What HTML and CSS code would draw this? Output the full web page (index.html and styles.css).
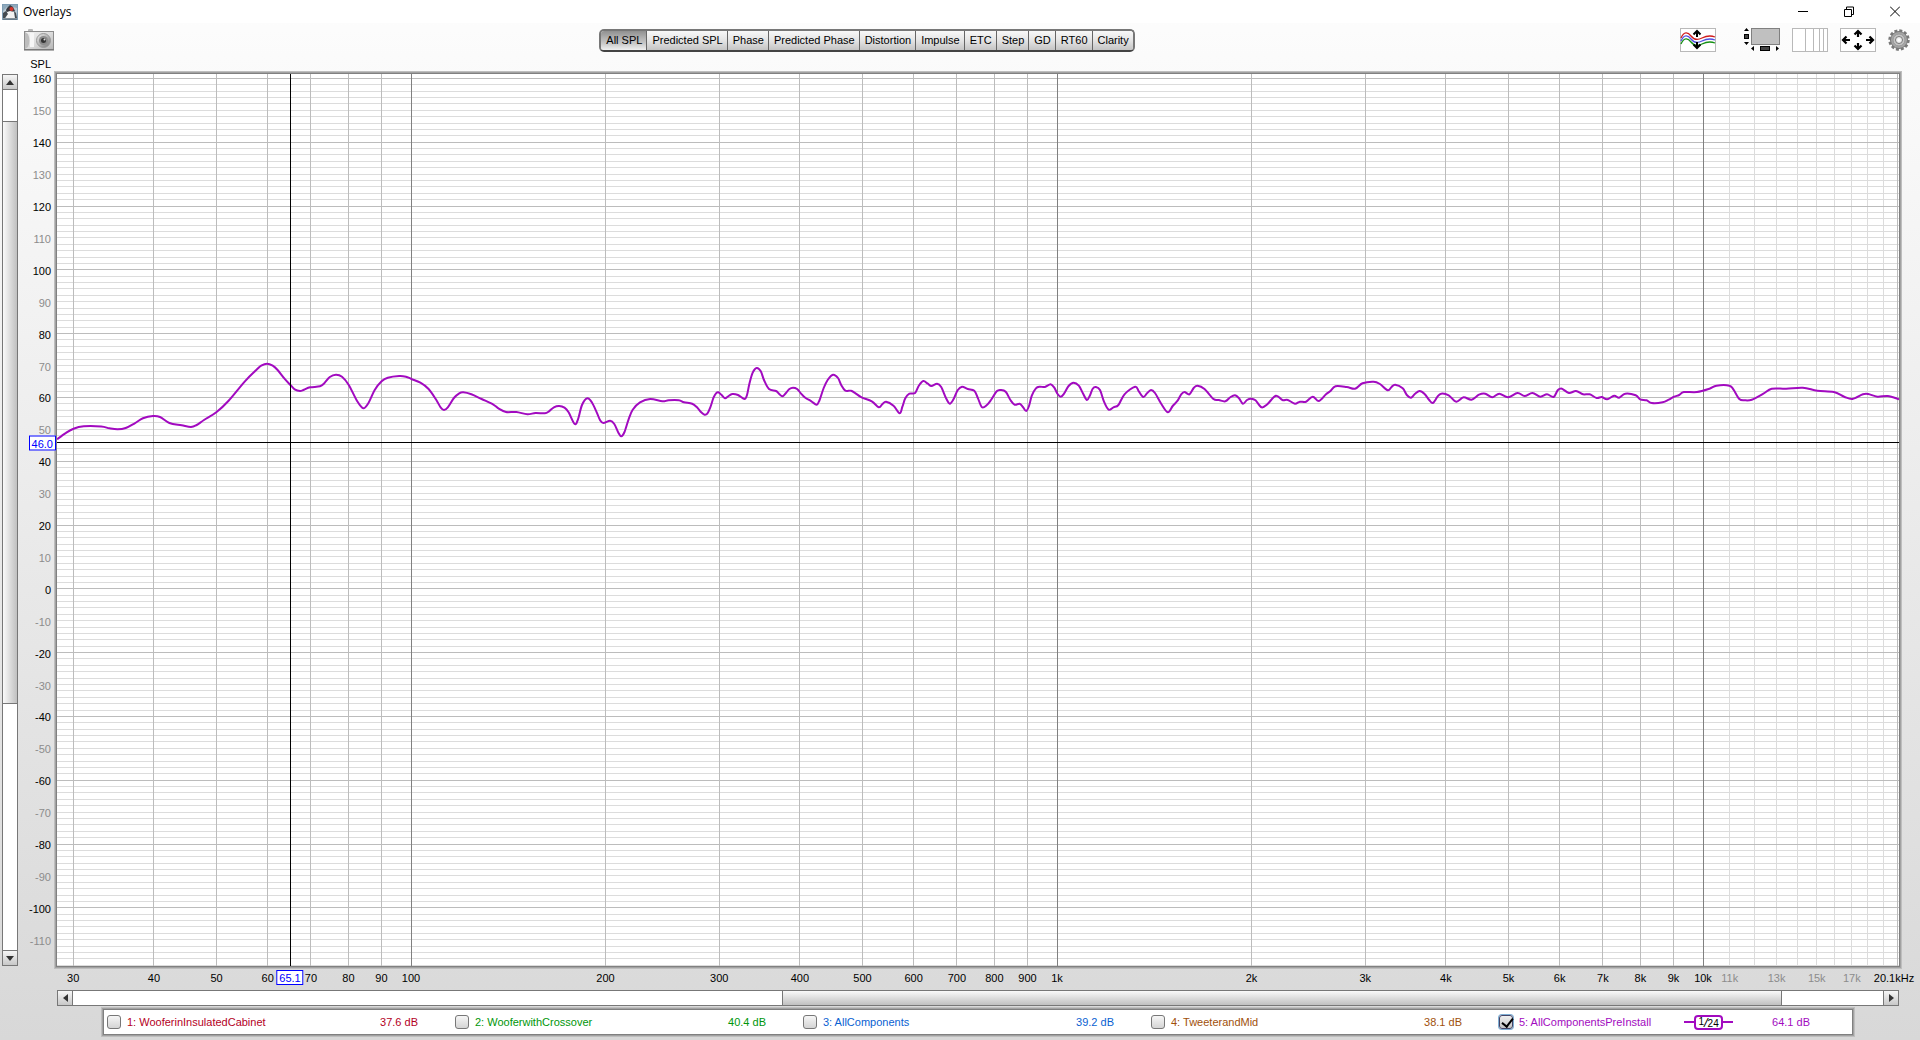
FILE: index.html
```
<!DOCTYPE html>
<html lang="en">
<head>
<meta charset="utf-8">
<title>Overlays</title>
<link rel="stylesheet" href="styles.css">
</head>
<body>
<header class="titlebar">
  <svg class="app-icon" width="16" height="16" viewBox="0 0 16 16" aria-hidden="true">
    <rect width="16" height="16" fill="#7f9db4"/>
    <rect x="1" y="1" width="14" height="14" fill="#b9c8d2"/>
    <path d="M1 1h14v3L11 3 5 3 1 7z" fill="#8fa9bb"/>
    <path d="M5 4l3-3 3 2 2 4-3 1-5 1-1-3z" fill="#3a3a40"/>
    <path d="M5 8l3-1 4 1 1 6H4z" fill="#f2f2f2"/>
    <path d="M1 9l3-2 2 3-3 4H1zM12 7l2 2 1 5h-2z" fill="#444a50"/>
    <circle cx="9.500" cy="5" r="2" fill="#d8352c"/>
    <path d="M1 15h14" stroke="#4c5860"/>
  </svg>
  <h1 class="title">Overlays</h1>
  <div class="window-buttons">
    <button type="button" aria-label="Minimize"><svg width="10" height="11" viewBox="0 0 10 11"><path d="M0 5.500h10" stroke="#000" fill="none"/></svg></button>
    <button type="button" aria-label="Restore"><svg width="10" height="11" viewBox="0 0 10 11"><path d="M.5 3.500h7v7h-7zM2.500 3.500v-2.500h7v7.500h-2" stroke="#000" fill="none"/></svg></button>
    <button type="button" aria-label="Close"><svg width="10" height="11" viewBox="0 0 10 11"><path d="M0 .5l10 10M10 .5l-10 10" stroke="#000" fill="none"/></svg></button>
  </div>
</header>

<div class="toolbar">
  <button type="button" class="tool" aria-label="Capture">
    <svg width="30" height="22" viewBox="0 0 30 22">
      <defs>
        <linearGradient id="cam" x1="0" y1="0" x2="1" y2="1"><stop offset="0" stop-color="#f4f4f4"/><stop offset=".5" stop-color="#dcdcdc"/><stop offset="1" stop-color="#b4b4b4"/></linearGradient>
        <linearGradient id="lens" x1="0" y1="0" x2="1" y2="1"><stop offset="0" stop-color="#eee"/><stop offset="1" stop-color="#777"/></linearGradient>
      </defs>
      <rect x="4" y="0" width="5" height="3" rx="1" fill="#b8b8b8"/>
      <rect x=".5" y="2.500" width="29" height="18" fill="url(#cam)" stroke="#8c8c8c"/>
      <path d="M1 20V3l3 2c2 4 2 9 0 13z" fill="#bdbdbd"/>
      <rect x="6" y="4" width="4" height="14" fill="#f6f6f6"/>
      <path d="M0 21h30" stroke="#666"/>
      <circle cx="19.500" cy="11.500" r="7" fill="url(#lens)" stroke="#999"/>
      <circle cx="19.500" cy="11.500" r="4.500" fill="#8b8b8b"/>
      <circle cx="19.500" cy="11.500" r="2.500" fill="#333"/>
      <circle cx="20.500" cy="10.500" r="1" fill="#ddd"/>
    </svg>
  </button>

  <nav class="tabs">
    <button type="button" class="active">All SPL</button><button type="button">Predicted SPL</button><button type="button">Phase</button><button type="button">Predicted Phase</button><button type="button">Distortion</button><button type="button">Impulse</button><button type="button">ETC</button><button type="button">Step</button><button type="button">GD</button><button type="button">RT60</button><button type="button">Clarity</button>
  </nav>

  <div class="tools">
    <button type="button" class="tool separate" aria-label="Separate traces">
      <svg width="36" height="24" viewBox="0 0 36 24" fill="none">
        <rect x=".5" y=".5" width="35" height="23" fill="#fff" stroke="#b9b9b9"/>
        <path d="M1 10C4 3 8 4 11 8s7 4 11 2 8-3 13-1" stroke="#d01c1c" stroke-width="1.300"/>
        <path d="M1 13C4 6 8 7 11 11s7 4 11 2 8-3 13-1" stroke="#5050e0" stroke-width="1.300"/>
        <path d="M1 16C4 9 8 10 11 14s7 4 11 2 8-3 13-1" stroke="#159015" stroke-width="1.300"/>
        <path d="M17 3v6M13.500 6.500L17 3l3.500 3.500M17 20v-6M13.500 16.500L17 20l3.500-3.500" stroke="#000" stroke-width="2"/>
      </svg>
    </button>
    <button type="button" class="tool" aria-label="Scrollbars">
      <svg width="36" height="24" viewBox="0 0 36 24">
        <rect x="7.500" y=".5" width="28" height="16" fill="#c0c0c0" stroke="#808080"/>
        <path d="M0 3l2.500-3L5 3zM0 14l2.500 3L5 14zM10 18v5l-3-2.500zM32 18v5l3-2.500z"/>
        <rect x=".5" y="6.500" width="4" height="4" fill="#444" stroke="#000"/>
        <rect x="16.500" y="18.500" width="9" height="4" fill="#444" stroke="#000"/>
      </svg>
    </button>
    <button type="button" class="tool" aria-label="Frequency axis">
      <svg width="36" height="24" viewBox="0 0 36 24">
        <rect x=".5" y=".5" width="35" height="23" fill="#fff" stroke="#b9b9b9"/>
        <path d="M13.500 1v22M21.500 1v22M27.500 1v22M31.500 1v22" stroke="#b9b9b9"/>
      </svg>
    </button>
    <button type="button" class="tool" aria-label="Limits">
      <svg width="36" height="24" viewBox="0 0 36 24" fill="none">
        <rect x=".5" y=".5" width="35" height="23" fill="#fff" stroke="#b9b9b9"/>
        <path d="M18 3v6M14.500 6.500L18 3l3.500 3.500M18 21v-6M14.500 17.500L18 21l3.500-3.500M3 12h7M6.500 8.500L3 12l3.500 3.500M33 12h-7M29.500 8.500L33 12l-3.500 3.500" stroke="#000" stroke-width="2.200"/>
      </svg>
    </button>
    <button type="button" class="tool" aria-label="Settings">
      <svg width="22" height="22" viewBox="0 0 22 22">
        <circle cx="11" cy="11" r="9.200" fill="none" stroke="#7a7a7a" stroke-width="3" stroke-dasharray="2.900 1.917"/>
        <circle cx="11" cy="11" r="8.500" fill="#a6a6a6" stroke="#777"/>
        <circle cx="11" cy="11" r="6" fill="#c4c4c4" stroke="#999"/>
        <circle cx="11" cy="11" r="3.500" fill="#eee" stroke="#777"/>
        <circle cx="11" cy="11" r="1.500" fill="#fff"/>
      </svg>
    </button>
  </div>
</div>

<main class="graph">
  <div class="axis-title">SPL</div>
  <div class="scroll scroll-v" role="scrollbar" aria-label="Level range" aria-orientation="vertical" aria-controls="plot" aria-valuenow="50">
    <button type="button" aria-label="Up"><svg width="8" height="5" viewBox="0 0 8 5"><path d="M0 5l4-5 4 5z" fill="#333"/></svg></button>
    <div class="track"><div class="before"></div><div class="thumb"></div><div class="after"></div></div>
    <button type="button" aria-label="Down"><svg width="8" height="5" viewBox="0 0 8 5"><path d="M0 0l4 5 4-5z" fill="#333"/></svg></button>
  </div>
  <div class="y-axis" id="y-axis"></div>
  <div class="plot" id="plot">
    <svg class="canvas" viewBox="57 74 1842 892" preserveAspectRatio="none">
      <g id="grid"></g>
      <path id="trace" class="trace"/>
      <path class="cursor" d="M290.500 74V966M57 442.500H1899"/>
    </svg>
  </div>
  <div class="x-axis" id="x-axis"></div>
  <div class="scroll scroll-h" role="scrollbar" aria-label="Frequency range" aria-orientation="horizontal" aria-controls="plot" aria-valuenow="50">
    <button type="button" aria-label="Left"><svg width="5" height="8" viewBox="0 0 5 8"><path d="M5 0L0 4l5 4z" fill="#333"/></svg></button>
    <div class="track"><div class="before"></div><div class="thumb"></div><div class="after"></div></div>
    <button type="button" aria-label="Right"><svg width="5" height="8" viewBox="0 0 5 8"><path d="M0 0l5 4-5 4z" fill="#333"/></svg></button>
  </div>
  <div class="legend">
    <div class="item red"><input type="checkbox" id="t1"><label for="t1">1: WooferinInsulatedCabinet</label><output>37.6 dB</output></div>
    <div class="item green"><input type="checkbox" id="t2"><label for="t2">2: WooferwithCrossover</label><output>40.4 dB</output></div>
    <div class="item blue"><input type="checkbox" id="t3"><label for="t3">3: AllComponents</label><output>39.2 dB</output></div>
    <div class="item brown"><input type="checkbox" id="t4"><label for="t4">4: TweeterandMid</label><output>38.1 dB</output></div>
    <div class="item purple"><input type="checkbox" id="t5" checked><label for="t5">5: AllComponentsPreInstall</label><span class="smoothing"><span class="fraction"><sup>1</sup><i>/</i><sub>24</sub></span></span><output>64.1 dB</output></div>
  </div>
</main>
<script src="script.js"></script>
</body>
</html>
```
FILE: styles.css
```
* { box-sizing: border-box; }

body {
  margin: 0;
  min-height: 100vh;
  display: flex;
  flex-direction: column;
  font: 11px/14px "Liberation Sans", Arial, sans-serif;
  color: #000;
  background: linear-gradient(#fdfdfd, #d8d8d8);
}

button {
  font: inherit;
  color: inherit;
  padding: 0;
  border: 0;
  background: none;
  display: flex;
  align-items: center;
  justify-content: center;
}

svg { display: block; }

.titlebar {
  display: flex;
  align-items: center;
  height: 23px;
  padding-left: 2px;
  background: #fff;
}

.title {
  margin: 0 auto 0 5px;
  font: 12px/16px "Open Sans", "Noto Sans", sans-serif;
}

.window-buttons { display: flex; height: 20px; margin-right: 2px; }
.window-buttons button { width: 46px; }

.toolbar {
  display: flex;
  justify-content: space-between;
  align-items: center;
  height: 36px;
  padding: 0 10px 2px 24px;
}

.tabs {
  display: flex;
  height: 23px;
  border: 2px solid #777;
  border-bottom-color: #444;
  border-radius: 5px;
  overflow: hidden;
}

.tabs button {
  padding: 0 4px 0 5px;
  border-left: 1px solid #666;
  background: linear-gradient(#f8f8f8, #e4e4e4 50%, #c4c4c4);
}

.tabs button.active {
  border-left: 0;
  background: linear-gradient(#909090, #b4b4b4 40%, #c8c8c8 65%, #f0f0f0);
}

.tools { display: flex; align-items: center; gap: 12px; }
.separate { margin-right: 16px; }

.graph {
  flex: 1;
  display: grid;
  grid-template-columns: 16px 39px 1fr;
  grid-template-rows: 15px 1fr 24px 16px 30px;
  padding: 0 21px 4px 2px;
}

.axis-title {
  grid-area: 1 / 1 / 2 / 3;
  padding-right: 6px;
  line-height: 10px;
  text-align: right;
}

.scroll { display: flex; border: 1px solid #777; background: #fff; }
.scroll button { flex: none; background: linear-gradient(#f6f6f6, #c8c8c8); }
.track { flex: 1; display: flex; }

.scroll-v { grid-area: 2 / 1; flex-direction: column; }
.scroll-v .track { flex-direction: column; }
.scroll-v button { height: 15px; }
.scroll-v button:first-child { border-bottom: 1px solid #777; }
.scroll-v button:last-child { border-top: 1px solid #777; }
.scroll-v .before { flex: 36; }
.scroll-v .thumb {
  flex: 677;
  border: solid #777;
  border-width: 1px 0;
  background: linear-gradient(90deg, #fafafa, #c0c0c0);
}
.scroll-v .after { flex: 287; }

.scroll-h { grid-area: 4 / 3; }
.scroll-h button { width: 15px; }
.scroll-h button:first-child { border-right: 1px solid #777; }
.scroll-h button:last-child { border-left: 1px solid #777; }
.scroll-h .before { flex: 392; }
.scroll-h .thumb {
  flex: 552;
  border: solid #777;
  border-width: 0 1px;
  background: linear-gradient(#fafafa, #c0c0c0);
}
.scroll-h .after { flex: 56; }

.plot {
  grid-area: 2 / 3;
  position: relative;
  background: #fff;
  box-shadow: 0 0 0 1px #808080, 0 0 0 2px #a2a2a2, 0 0 0 3px #bebebe;
}

/* The drawing follows the plot area, which takes its size from the grid. */
.canvas { position: absolute; inset: 0; width: 100%; height: 100%; }
.canvas path { fill: none; vector-effect: non-scaling-stroke; }
.light { stroke: #dcdcdc; shape-rendering: crispEdges; }
.major { stroke: #bcbcbc; shape-rendering: crispEdges; }
.decade { stroke: #808080; shape-rendering: crispEdges; }
.trace { stroke: #a20ac0; stroke-width: 2; stroke-linejoin: round; }
.cursor { stroke: #000; shape-rendering: crispEdges; }

.y-axis { grid-area: 2 / 2; position: relative; }
.y-axis .tick { position: absolute; right: 6px; transform: translateY(-50%); }
.x-axis { grid-area: 3 / 3; position: relative; }
.x-axis .tick { position: absolute; top: 5px; transform: translateX(-50%); }
.dim { color: #8c8c8c; }

.y-axis .readout, .x-axis .readout {
  z-index: 1;
  height: 15px;
  padding: 0 2px;
  border: 1px solid #00f;
  line-height: 14px;
  color: #00f;
  background: #fff;
}
.y-axis .readout { right: 1px; }
.x-axis .readout { top: 4px; }

.legend {
  grid-area: 5 / 3;
  display: grid;
  grid-template-columns: repeat(5, 1fr);
  margin: 4px 47px 2px;
  padding: 0 5px 0 3px;
  background: #fff;
  box-shadow: 0 0 0 1px #808080, 0 0 0 2px #a2a2a2, 0 0 0 3px #bebebe;
}

.item {
  display: flex;
  align-items: center;
  padding-right: 37px;
  white-space: nowrap;
}

.item label { margin: 0 auto 0 6px; }
.item output { text-align: right; }

.item input {
  appearance: none;
  width: 14px;
  height: 14px;
  margin: 0;
  border: 1px solid #777;
  border-radius: 3px;
  background: linear-gradient(#f6f6f6, #d4d4d4);
}

.item input:checked {
  border-color: #446;
  box-shadow: 0 0 0 1px #7eaed4;
  background: linear-gradient(#f0f0f0, #c4c4c4);
}

.item input:checked::before {
  content: "";
  display: block;
  width: 5px;
  height: 9px;
  margin-left: 4px;
  border: solid #000;
  border-width: 0 2px 2px 0;
  transform: rotate(38deg);
}

.red { color: #b4001e; }
.green { color: #00960a; }
.blue { color: #0a5fd2; }
.brown { color: #a0500a; }
.purple { color: #a20ac0; }

.smoothing { display: flex; align-items: center; margin-right: 39px; }
.smoothing::before, .smoothing::after {
  content: "";
  width: 10px;
  height: 2px;
  background: currentColor;
}

.fraction {
  display: flex;
  justify-content: center;
  width: 29px;
  height: 15px;
  border: 2px solid #a20ac0;
  border-radius: 4px;
  line-height: 11px;
  color: #000;
}
.fraction sup, .fraction sub { font-size: 10px; line-height: 10px; vertical-align: baseline; }
.fraction sub { padding-top: 2px; }
.fraction i { font-size: 13px; }
```
FILE: script.js
```
// Drawing units of the plot: see the viewBox of the canvas.
const LEFT = 57, TOP = 74, WIDTH = 1842, HEIGHT = 892;
const xOf = f => 411 + 646 * (Math.log10(f) - 2);
const yOf = db => 78.4 + (160 - db) * 3.19;

const grid = document.getElementById('grid');
function addLines(kind, d) {
  const p = document.createElementNS('http://www.w3.org/2000/svg', 'path');
  p.setAttribute('class', kind);
  p.setAttribute('d', d.join(''));
  grid.append(p);
}
const lines = { light: [], major: [], decade: [] };
for (let db = 160; db >= -118; db -= 2) {
  const y = Math.floor(yOf(db)) + 0.5;
  lines[db % 20 ? 'light' : 'major'].push(`M${LEFT} ${y}h${WIDTH}`);
}
const freqs = [];
for (let f = 30; f < 100; f += 10) freqs.push(f);
for (let f = 100; f < 1000; f += 100) freqs.push(f);
for (let f = 1000; f <= 20000; f += 1000) freqs.push(f);
for (const f of freqs) {
  const kind = [100, 1000, 10000].includes(f) ? 'decade' : f > 10000 && f < 20000 ? 'light' : 'major';
  lines[kind].push(`M${Math.floor(xOf(f)) + 0.5} ${TOP}v${HEIGHT}`);
}
for (const kind in lines) addLines(kind, lines[kind]);

function addTick(axis, side, offset, text, extra) {
  const el = document.createElement('span');
  el.className = 'tick ' + extra;
  el.style[side] = offset * 100 + '%';
  el.textContent = text;
  document.getElementById(axis).append(el);
}
for (let db = 160; db >= -110; db -= 10) {
  addTick('y-axis', 'top', (yOf(db) + 1 - TOP) / HEIGHT, db, db % 20 ? 'dim' : '');
}
addTick('y-axis', 'top', (442.5 - TOP) / HEIGHT, '46.0', 'readout');

for (const f of freqs.filter(f => f <= 10000 || [11000, 13000, 15000, 17000].includes(f))) {
  addTick('x-axis', 'left', (xOf(f) - LEFT) / WIDTH, f < 1000 ? f : f / 1000 + 'k', f > 10000 ? 'dim' : '');
}
addTick('x-axis', 'left', (1894 - LEFT) / WIDTH, '20.1kHz', '');
addTick('x-axis', 'left', (290 - LEFT) / WIDTH, '65.1', 'readout');

const samples = `57,439.3 65.3,433.3 73.5,428.7 83.7,426.3 101.2,426.5 109.4,428.3 117.6,429.3 125.7,428 134.7,423.3 142.9,418.3 153,416 160,417 169.4,423 181.6,425.3 191,427 196.7,425 204,420 216.3,412.3 228.6,400.7 244.9,381.3 257,369.3 261.2,365.7 267,363.7 272.7,365.7 277.6,370 284.5,378.7 290.2,384.7 294.7,389.3 300,391 304,389.7 310.2,387.3 320,386.3 324.5,383 329.8,377 335.9,374.7 342,376.7 348.6,384.7 357.1,401 363.3,408.3 368.6,402.7 374.7,390 381.6,381.3 387.8,377.7 399.2,376 406,376.7 411.4,379 420.4,382.7 428.6,389 435.9,399.3 440.8,407.7 444,410 447.8,407.3 453.9,398 459.2,393.3 463.3,392.3 471.4,394.3 481.6,399 493,404.3 498.8,408.7 506,412 516.3,412 527.3,414.3 535.5,413 544.9,413.3 549,411.3 553.9,407.3 559.2,406 564.5,407.7 568.6,412.3 574.7,424 578,419.3 582,405 587.3,398.3 591.8,402.3 596.7,412.3 600,420 603.3,423 610.2,420.7 614.3,424 618.4,432.7 621.2,436.3 624.5,432 628.6,419.3 632.7,409.7 640,402.3
650.2,399 662.4,401.3 668.6,400.3 678.8,400.3 684,402.3 692.2,403.7 697,407.3 701.2,412.3 704.5,414.7 707.3,413.7 710.2,407.7 713.5,397.7 716,393.3 718.4,392.3 721.6,395 725,398.3 728.2,396.3 732.2,394 738,395 744.5,399 747,395 749.4,383.7 752.7,372.7 756.7,368 760.8,371.3 764,380 769,389 776,391 779.2,394 782.4,396.3 785.7,393.3 789.4,389 793,387.7 797.1,389 801.2,393.7 805.3,397.7 811.4,401.3 816.7,404.7 819.6,400 823.7,388 827.8,379.7 833,374.7 838,378 841.2,385 845.3,390.7 851,390.7 855.5,393.3 861.6,397.3 871.8,401.3 878.8,407.3 882.4,404 886.1,401.7 893.5,405.7 899.6,413.3 902.4,406.7 905.3,398.3 909.4,393.7 915.1,393 918.8,385.7 923.3,381 927.8,383.7 931.4,386 937.1,383.7 941.2,387 946.1,398.3 949.8,403.7 953.5,399.3 957.6,390.3 962,386.7 967.8,389 974.3,390.7 978,398.3 982,407.3 986.9,405 991,400 996.7,391.3 1000.8,390 1005.7,391.7 1010.6,400.3 1014.7,404.7 1019.6,403.7 1022.9,407 1026.1,411 1029,406 1031.8,395.7 1035.9,388.3 1040,386.7 1044.9,387 1050.6,384.3 1054.3,387.7 1057.6,394 1060.8,396.7 1064,393.7 1068.6,386 1073.5,382.7 1078.8,385.7 1082.9,393.3 1086.9,400 1089.8,395.7 1092.7,388.7 1095.9,387 1100,390 1104,401.7 1108.6,409.7 1113.5,407.3 1118.4,405 1124.5,394.3 1135.1,386.7 1138.8,391.3 1143.3,397 1147,393.3 1151,390 1155,393 1161.2,403.7 1167.8,412.3 1172.7,406 1177.6,400.7 1181.2,394.3 1184.5,392 1189.4,394.3 1193.9,387.7 1197.6,385.7 1204.5,389 1213.5,399 1218.8,400 1225.3,401.3 1230.6,397 1235,395.3 1238.8,398 1242.9,403.7 1247,400 1251,398.7 1255.5,400.3 1261.6,407.3 1267.3,404.3
1275.8,395.7 1282.4,400 1287.8,400 1294.9,403.7 1299.9,401.7 1306,401.7 1312.7,396.7 1318.9,401 1326,394.3 1330.1,391.3 1335.5,386.3 1346.7,387 1355,388.7 1362.5,383.3 1373.6,381.7 1379.9,384 1387.7,390.3 1391.5,387 1395.2,384.7 1402.7,388.3 1406.8,395 1411,397.7 1415.1,393.7 1419.7,391 1424.6,394 1429.2,400 1432.9,403 1437.5,396.7 1441.2,393.7 1448.7,395.3 1456.2,401.7 1463.6,397.3 1471.5,399.7 1479,394.7 1485.2,393.7 1492.2,397.3 1499.3,393.7 1508,397.3 1517.5,393 1524.6,396 1532.4,393 1540.3,396.7 1547,394.3 1553.6,397 1557.7,390.3 1561.9,388.7 1568.9,393 1576,391 1583,394.3 1589.7,394.3 1596.7,398 1601.7,397 1607.1,399.3 1614.1,395.7 1619.1,397.7 1625.3,393.7 1635.7,395.3 1640.2,399.3 1646.5,400.3 1651.8,403 1662.6,402.3 1668.8,399.7 1674.2,396.7 1679.2,395 1683.8,392 1697,392 1709.5,388.7 1716.5,385.7 1729.4,385.7 1733.5,389.7 1739.3,399 1744.7,400.3 1751.8,399.7 1763.4,393.7 1771.7,388.7 1786.2,388.7 1802.8,387.7 1817.3,390.7 1833.8,392 1844.2,396.7 1852.5,399 1862.9,394.3 1868.2,394 1877.4,396.7 1887.7,396 1899,399.3`
  .split(/\s+/).map(s => s.split(',').map(Number));

// Smooth curve through the samples (Catmull-Rom spline as cubic segments).
let d = 'M' + samples[0];
for (let i = 0; i < samples.length - 1; i++) {
  const a = samples[i - 1] || samples[i], b = samples[i];
  const c = samples[i + 1], e = samples[i + 2] || c;
  d += `C${b[0] + (c[0] - a[0]) / 6},${b[1] + (c[1] - a[1]) / 6} ` +
       `${c[0] - (e[0] - b[0]) / 6},${c[1] - (e[1] - b[1]) / 6} ${c[0]},${c[1]}`;
}
document.getElementById('trace').setAttribute('d', d);
```
